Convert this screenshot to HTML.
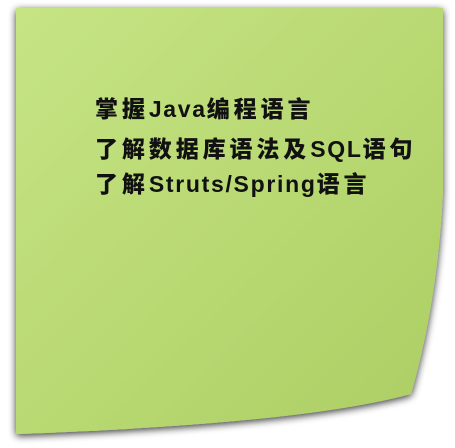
<!DOCTYPE html>
<html><head><meta charset="utf-8"><style>
html,body{margin:0;padding:0;width:455px;height:448px;background:#fff;overflow:hidden;position:relative}
svg{position:absolute;left:0;top:0}
.t{position:absolute;left:95px;font-family:"Liberation Sans","Noto Sans CJK SC",sans-serif;font-weight:bold;font-size:23px;letter-spacing:1.7px;color:#111;white-space:nowrap;line-height:26px}
.t b{letter-spacing:3.9px}
</style></head><body>
<svg width="455" height="448">
<defs>
<linearGradient id="g" x1="0" y1="0" x2="1" y2="1">
<stop offset="0" stop-color="#c6e484"/><stop offset="1" stop-color="#acce63"/>
</linearGradient>
<filter id="s" x="-10%" y="-10%" width="120%" height="120%">
<feGaussianBlur in="SourceAlpha" stdDeviation="4"/>
<feOffset dx="0" dy="2"/>
<feComponentTransfer><feFuncA type="linear" slope="0.8"/></feComponentTransfer>
<feMerge><feMergeNode/><feMergeNode in="SourceGraphic"/></feMerge>
</filter>
</defs>
<path d="M16,8 L443,8 L443,190 Q438,300 411,394 Q300,424 16,434 Z" fill="url(#g)" filter="url(#s)"/>
</svg>
<div class="t" style="top:96px"><b>掌握</b>Java<b>编程语言</b></div>
<div class="t" style="top:136px"><b>了解数据库语法及</b>SQL<b>语句</b></div>
<div class="t" style="top:171px"><b>了解</b>Struts/Spring<b>语言</b></div>
</body></html>
